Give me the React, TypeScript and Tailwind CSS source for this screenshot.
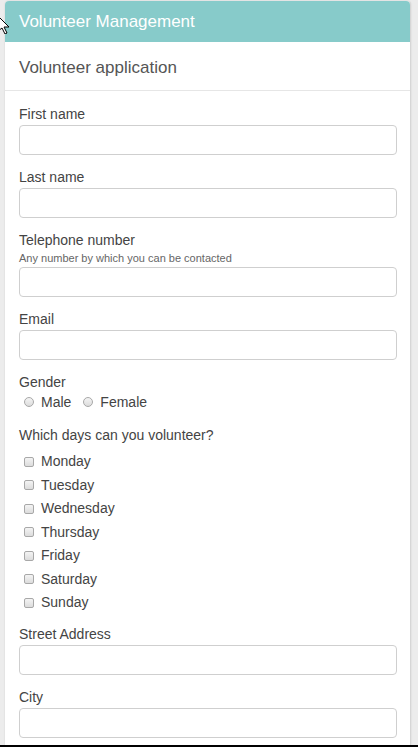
import React from "react";

const font = { fontFamily: '"Liberation Sans", Arial, sans-serif' };

function Field({ label, help }: { label: string; help?: string }) {
  return (
    <div className="mb-[12px]">
      <div className="h-[20px] leading-[20px] text-[14px] text-[#444]">{label}</div>
      {help && <div className="h-[16px] leading-[16px] text-[11px] text-[#666]">{help}</div>}
      <div className="mt-[1px] h-[30px] rounded-[4px] border border-[#cfcfcf] bg-white" />
    </div>
  );
}

function Check({ label }: { label: string }) {
  return (
    <div className="flex h-[23.5px] items-center">
      <span className="ml-[5px] mr-[7px] h-[10px] w-[10px] rounded-[2px] border border-[#a8a8a8] bg-gradient-to-b from-[#f4f4f4] to-[#dcdcdc]" />
      <span className="text-[14px] text-[#444]">{label}</span>
    </div>
  );
}

function Radio({ label }: { label: string }) {
  return (
    <div className="flex items-center">
      <span className="ml-[5px] mr-[7px] h-[10px] w-[10px] rounded-full border border-[#a8a8a8] bg-gradient-to-b from-[#f4f4f4] to-[#dcdcdc]" />
      <span className="text-[14px] text-[#444]">{label}</span>
    </div>
  );
}

export default function App() {
  const days = ["Monday", "Tuesday", "Wednesday", "Thursday", "Friday", "Saturday", "Sunday"];
  return (
    <div style={font} className="relative flex h-[747px] w-[418px] flex-col overflow-hidden bg-[#ececec]">
      <div className="flex-1 overflow-hidden pl-[5px] pr-[7px] pt-[1px]">
        <div className="h-full rounded-t-[4px] border-r border-[#d6d6d6] bg-white shadow-[0_0_2px_rgba(0,0,0,0.12)]">
          <div className="flex h-[41px] items-center rounded-t-[4px] bg-[#87cbca] pl-[14px] text-[17px] text-white">
            Volunteer Management
          </div>
          <div className="flex h-[49px] items-center border-b border-[#e6e6e6] pl-[14px] pt-[3px] text-[17px] text-[#555]">
            Volunteer application
          </div>
          <div className="pl-[14px] pr-[13px] pt-[13px]">
            <Field label="First name" />
            <Field label="Last name" />
            <Field label="Telephone number" help="Any number by which you can be contacted" />
            <Field label="Email" />
            <div className="h-[20px] leading-[20px] text-[14px] text-[#444]">Gender</div>
            <div className="flex h-[20px] items-center gap-[7px]">
              <Radio label="Male" />
              <Radio label="Female" />
            </div>
            <div className="mt-[13px] h-[20px] leading-[20px] text-[14px] text-[#444]">Which days can you volunteer?</div>
            <div className="mt-[5px] mb-[9px]">
              {days.map((d) => (
                <Check key={d} label={d} />
              ))}
            </div>
            <Field label="Street Address" />
            <Field label="City" />
          </div>
        </div>
      </div>
      <div className="h-[2px] bg-black" />
      <svg className="absolute left-0 top-[16px]" width="10" height="18" viewBox="0 0 10 18">
        <path d="M-2 0 L9 11 L4 11 L7 17 L5 18 L2 12 L-2 15 Z" fill="white" stroke="black" strokeWidth="1" />
      </svg>
    </div>
  );
}
